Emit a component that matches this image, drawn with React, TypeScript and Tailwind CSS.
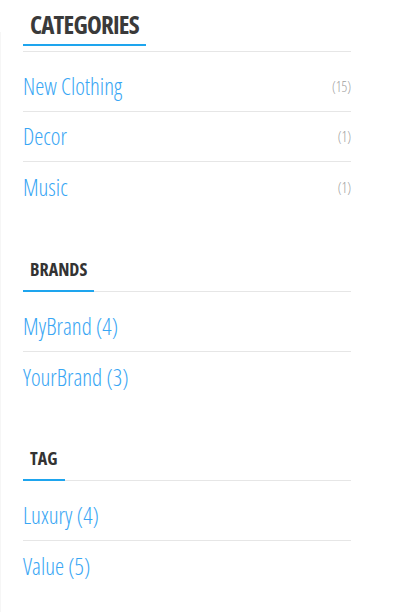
import React from "react";

type Row = { name: string; count: string };

const categories: Row[] = [
  { name: "New Clothing", count: "(15)" },
  { name: "Decor", count: "(1)" },
  { name: "Music", count: "(1)" },
];

const brands = ["MyBrand (4)", "YourBrand (3)"];
const tags = ["Luxury (4)", "Value (5)"];

function SmallHeading({ title }: { title: string }) {
  return (
    <div className="border-b border-[#e6e6e6]">
      <h3 className="-mb-px inline-block border-b-2 border-[#1ea5ee] px-[7px] pb-[9px] text-[18px] font-bold leading-[24px] text-[#333333]">
        {title}
      </h3>
    </div>
  );
}

function SimpleList({ items }: { items: string[] }) {
  return (
    <ul className="pt-[10px]">
      {items.map((t, i) => (
        <li
          key={t}
          className={`flex h-[50px] items-center ${i < items.length - 1 ? "border-b border-[#e6e6e6]" : ""}`}
        >
          <a className="text-[23px] font-light text-[#38a6f4] [font-variation-settings:'wght'_300]">{t}</a>
        </li>
      ))}
    </ul>
  );
}

export default function App() {
  return (
    <div className="flex min-h-[612px] w-[400px] bg-white font-['Open_Sans',sans-serif] [font-stretch:75%]">
      <div className="mt-[32px] w-px bg-[#f6f6f6]" />
      <div className="ml-[22px] w-[328px] pt-[7px]">
        <section>
          <div className="border-b border-[#e6e6e6] pb-[5px]">
            <h2 className="inline-block border-b-2 border-[#1ea5ee] px-[7px] pb-[3px] text-[25px] font-bold leading-[34px] tracking-[-0.8px] text-[#3a3a3a]">
              CATEGORIES
            </h2>
          </div>
          <ul className="pt-[10px]">
            {categories.map((c, i) => (
              <li
                key={c.name}
                className={`flex h-[50px] items-center justify-between ${i < categories.length - 1 ? "border-b border-[#e6e6e6]" : ""}`}
              >
                <a className="text-[23px] font-light text-[#38a6f4] [font-variation-settings:'wght'_300]">{c.name}</a>
                <span className="text-[14px] font-light text-[#a0a0a0] [font-variation-settings:'wght'_300]">{c.count}</span>
              </li>
            ))}
          </ul>
        </section>
        <section className="mt-[45px]">
          <SmallHeading title="BRANDS" />
          <SimpleList items={brands} />
        </section>
        <section className="mt-[44px]">
          <SmallHeading title="TAG" />
          <SimpleList items={tags} />
        </section>
      </div>
    </div>
  );
}
